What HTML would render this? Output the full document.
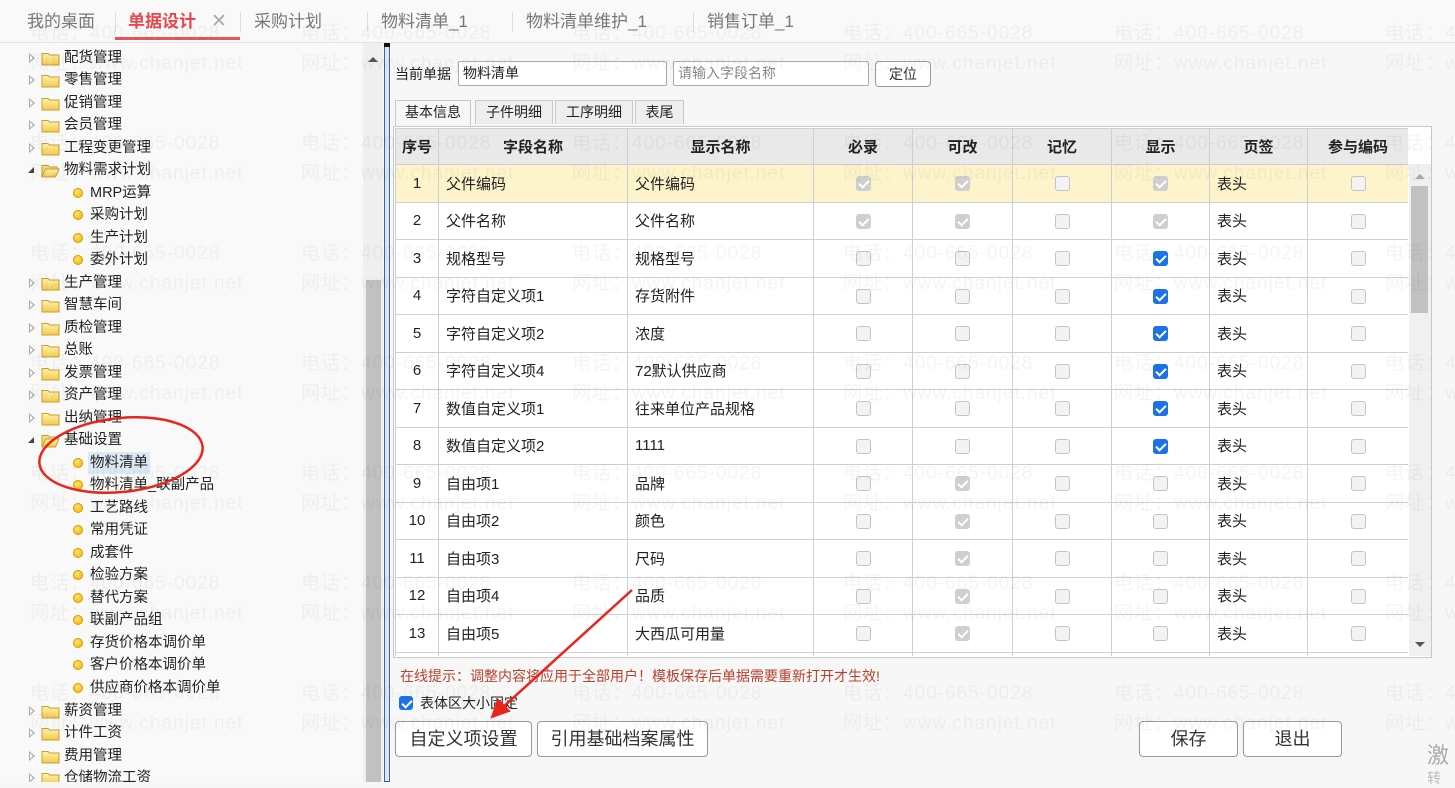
<!DOCTYPE html>
<html><head><meta charset="utf-8">
<style>
*{margin:0;padding:0;box-sizing:border-box}
body{width:1455px;height:782px;overflow:hidden;background:#f7f7f7;font-family:"Liberation Sans","Noto Sans CJK SC",sans-serif;font-size:14px;color:#222;position:relative}
.abs{position:absolute}
#tabs{left:0;top:0;width:1455px;height:43px;background:#f9f9f9;border-bottom:1px solid #e4e4e4}
.tab{position:absolute;top:9px;font-size:17px;color:#777;line-height:26px}
.sep{position:absolute;top:12px;width:1px;height:20px;background:#ddd}
#tree{left:0;top:43px;width:363px;height:739px;background:#f9f9f9;overflow:hidden}
.row{position:absolute;height:22px;line-height:22px;font-size:14.5px;color:#222;white-space:nowrap}
.arr{position:absolute;left:29px;top:6px;width:0;height:0;border-top:5px solid transparent;border-bottom:5px solid transparent;border-left:6px solid #aaa}
.arr:after{content:"";position:absolute;left:-5px;top:-3px;border-top:3px solid transparent;border-bottom:3px solid transparent;border-left:3px solid #f9f9f9}
.exp{position:absolute;left:28px;top:8px;width:0;height:0;border-left:6px solid transparent;border-bottom:6px solid #444}
.fold{position:absolute;left:41px;top:4px}
.dot{position:absolute;left:73px;top:6px;width:10px;height:10px;border-radius:50%;background:radial-gradient(circle at 40% 35%,#ffe46a,#f2b300);border:1px solid #d89a00}
#lsb{left:363px;top:43px;width:20px;height:739px;background:#efefef}
#main{left:391px;top:43px;width:1064px;height:739px;background:#f7f7f7}
.inp{position:absolute;height:25px;border:1px solid #aaa;background:#fff;font-size:14px;line-height:23px;padding-left:4px;border-radius:2px}
.btn{position:absolute;border:1px solid #999;border-radius:4px;background:#fff;text-align:center;color:#333}
.ttab{position:absolute;top:100px;height:24px;line-height:22px;border:1px solid #c8c8c8;border-bottom:none;background:#eee;font-size:14px;text-align:center;color:#222}
#tw{left:395px;top:128px;width:1013px;height:528px;overflow:hidden;background:#fff}
table{border-collapse:collapse;table-layout:fixed;width:1013px}
td,th{border:1px solid #cfcfcf;height:37.5px;font-size:15px;padding:0}
th{background:#e9e9e9;height:36px;font-weight:bold;font-size:15px}
td.c{text-align:center}
td.l{padding-left:7px}
tr.y td{background:#fdf4cb}
.cb{display:inline-block;width:15px;height:15px;border:1px solid #c4c4c4;border-radius:3px;background:#f3f3f3;position:relative;vertical-align:middle}
.cb.g{background:#cfcfcf;border-color:#cfcfcf}
.cb.b{background:#1a73e8;border-color:#1a73e8}
.cb.g:after,.cb.b:after{content:"";position:absolute;left:4px;top:1px;width:4px;height:8px;border:solid #fff;border-width:0 2px 2px 0;transform:rotate(45deg)}
.wm{position:absolute;font-size:19px;color:rgba(0,0,0,0.042);white-space:nowrap;letter-spacing:1px;pointer-events:none}
</style></head><body>

<div id="tabs" class="abs">
 <div class="tab" style="left:27px">我的桌面</div>
 <div class="sep" style="left:115px"></div>
 <div class="tab" style="left:128px;color:#e8474f;font-weight:bold">单据设计</div>
 <div class="tab" style="left:211px;color:#aaa;font-size:19px">✕</div>
 <div class="abs" style="left:115px;top:37px;width:125px;height:3px;background:#e8545c"></div>
 <div class="sep" style="left:240px"></div>
 <div class="tab" style="left:254px">采购计划</div>
 <div class="sep" style="left:367px"></div>
 <div class="tab" style="left:381px">物料清单_1</div>
 <div class="sep" style="left:512px"></div>
 <div class="tab" style="left:526px">物料清单维护_1</div>
 <div class="sep" style="left:693px"></div>
 <div class="tab" style="left:707px">销售订单_1</div>
</div>

<svg width="0" height="0" style="position:absolute"><defs>
<linearGradient id="fg" x1="0" y1="0" x2="0" y2="1"><stop offset="0" stop-color="#fff3b0"/><stop offset="1" stop-color="#f2c94c"/></linearGradient>
<symbol id="fd" viewBox="0 0 19 15"><path d="M1 2.5h6l1.5 1.5H18v10H1z" fill="url(#fg)" stroke="#c8a030" stroke-width="1"/></symbol>
<symbol id="fo" viewBox="0 0 19 15"><path d="M1 2.5h6l1.5 1.5H16v2H4.5L1 14z" fill="#f7dd80" stroke="#c8a030"/><path d="M4.5 6H18l-3.5 8H1z" fill="url(#fg)" stroke="#c8a030"/></symbol>
</defs></svg>

<div id="tree" class="abs">
 <div class="row" style="top:4px;left:0;width:360px"><i class="arr"></i><svg class="fold" width="19" height="15"><use href="#fd"/></svg><span style="position:absolute;left:64px">配货管理</span></div>
 <div class="row" style="top:26px;left:0;width:360px"><i class="arr"></i><svg class="fold" width="19" height="15"><use href="#fd"/></svg><span style="position:absolute;left:64px">零售管理</span></div>
 <div class="row" style="top:49px;left:0;width:360px"><i class="arr"></i><svg class="fold" width="19" height="15"><use href="#fd"/></svg><span style="position:absolute;left:64px">促销管理</span></div>
 <div class="row" style="top:71px;left:0;width:360px"><i class="arr"></i><svg class="fold" width="19" height="15"><use href="#fd"/></svg><span style="position:absolute;left:64px">会员管理</span></div>
 <div class="row" style="top:94px;left:0;width:360px"><i class="arr"></i><svg class="fold" width="19" height="15"><use href="#fd"/></svg><span style="position:absolute;left:64px">工程变更管理</span></div>
 <div class="row" style="top:116px;left:0;width:360px"><i class="exp"></i><svg class="fold" width="19" height="15"><use href="#fo"/></svg><span style="position:absolute;left:64px">物料需求计划</span></div>
 <div class="row" style="top:139px;left:0;width:360px"><i class="dot"></i><span style="position:absolute;left:90px">MRP运算</span></div>
 <div class="row" style="top:161px;left:0;width:360px"><i class="dot"></i><span style="position:absolute;left:90px">采购计划</span></div>
 <div class="row" style="top:184px;left:0;width:360px"><i class="dot"></i><span style="position:absolute;left:90px">生产计划</span></div>
 <div class="row" style="top:206px;left:0;width:360px"><i class="dot"></i><span style="position:absolute;left:90px">委外计划</span></div>
 <div class="row" style="top:229px;left:0;width:360px"><i class="arr"></i><svg class="fold" width="19" height="15"><use href="#fd"/></svg><span style="position:absolute;left:64px">生产管理</span></div>
 <div class="row" style="top:251px;left:0;width:360px"><i class="arr"></i><svg class="fold" width="19" height="15"><use href="#fd"/></svg><span style="position:absolute;left:64px">智慧车间</span></div>
 <div class="row" style="top:274px;left:0;width:360px"><i class="arr"></i><svg class="fold" width="19" height="15"><use href="#fd"/></svg><span style="position:absolute;left:64px">质检管理</span></div>
 <div class="row" style="top:296px;left:0;width:360px"><i class="arr"></i><svg class="fold" width="19" height="15"><use href="#fd"/></svg><span style="position:absolute;left:64px">总账</span></div>
 <div class="row" style="top:319px;left:0;width:360px"><i class="arr"></i><svg class="fold" width="19" height="15"><use href="#fd"/></svg><span style="position:absolute;left:64px">发票管理</span></div>
 <div class="row" style="top:341px;left:0;width:360px"><i class="arr"></i><svg class="fold" width="19" height="15"><use href="#fd"/></svg><span style="position:absolute;left:64px">资产管理</span></div>
 <div class="row" style="top:364px;left:0;width:360px"><i class="arr"></i><svg class="fold" width="19" height="15"><use href="#fd"/></svg><span style="position:absolute;left:64px">出纳管理</span></div>
 <div class="row" style="top:386px;left:0;width:360px"><i class="exp"></i><svg class="fold" width="19" height="15"><use href="#fo"/></svg><span style="position:absolute;left:64px">基础设置</span></div>
 <div class="row" style="top:409px;left:0;width:360px"><i class="dot"></i><span style="position:absolute;left:88px;padding:0 2px;background:#dde8f5">物料清单</span></div>
 <div class="row" style="top:431px;left:0;width:360px"><i class="dot"></i><span style="position:absolute;left:90px">物料清单_联副产品</span></div>
 <div class="row" style="top:454px;left:0;width:360px"><i class="dot"></i><span style="position:absolute;left:90px">工艺路线</span></div>
 <div class="row" style="top:476px;left:0;width:360px"><i class="dot"></i><span style="position:absolute;left:90px">常用凭证</span></div>
 <div class="row" style="top:499px;left:0;width:360px"><i class="dot"></i><span style="position:absolute;left:90px">成套件</span></div>
 <div class="row" style="top:521px;left:0;width:360px"><i class="dot"></i><span style="position:absolute;left:90px">检验方案</span></div>
 <div class="row" style="top:544px;left:0;width:360px"><i class="dot"></i><span style="position:absolute;left:90px">替代方案</span></div>
 <div class="row" style="top:566px;left:0;width:360px"><i class="dot"></i><span style="position:absolute;left:90px">联副产品组</span></div>
 <div class="row" style="top:589px;left:0;width:360px"><i class="dot"></i><span style="position:absolute;left:90px">存货价格本调价单</span></div>
 <div class="row" style="top:611px;left:0;width:360px"><i class="dot"></i><span style="position:absolute;left:90px">客户价格本调价单</span></div>
 <div class="row" style="top:634px;left:0;width:360px"><i class="dot"></i><span style="position:absolute;left:90px">供应商价格本调价单</span></div>
 <div class="row" style="top:657px;left:0;width:360px"><i class="arr"></i><svg class="fold" width="19" height="15"><use href="#fd"/></svg><span style="position:absolute;left:64px">薪资管理</span></div>
 <div class="row" style="top:679px;left:0;width:360px"><i class="arr"></i><svg class="fold" width="19" height="15"><use href="#fd"/></svg><span style="position:absolute;left:64px">计件工资</span></div>
 <div class="row" style="top:702px;left:0;width:360px"><i class="arr"></i><svg class="fold" width="19" height="15"><use href="#fd"/></svg><span style="position:absolute;left:64px">费用管理</span></div>
 <div class="row" style="top:724px;left:0;width:360px"><i class="arr"></i><svg class="fold" width="19" height="15"><use href="#fd"/></svg><span style="position:absolute;left:64px">仓储物流工资</span></div>
</div>

<div id="lsb" class="abs">
 <div class="abs" style="left:5px;top:14px;width:0;height:0;border-left:5px solid transparent;border-right:5px solid transparent;border-bottom:5px solid #555"></div>
 <div class="abs" style="left:3px;top:237px;width:15px;height:502px;background:#c1c1c1"></div>
</div>
<div class="abs" style="left:384px;top:43px;width:6px;height:739px;background:#dbe6f5;border:1px solid #3a62a8"></div>
<div class="abs" style="left:384px;top:43px;width:6px;height:4px;background:#111"></div>

<div id="main" class="abs"></div>
<div class="abs" style="left:395px;top:64px;font-size:14px">当前单据</div>
<div class="inp" style="left:458px;top:61px;width:209px">物料清单</div>
<div class="inp" style="left:673px;top:61px;width:196px;color:#888">请输入字段名称</div>
<div class="btn" style="left:875px;top:61px;width:56px;height:26px;line-height:24px;font-size:14px">定位</div>

<div class="ttab" style="left:395px;width:76px;background:#f7f7f7;height:26px">基本信息</div>
<div class="ttab" style="left:475px;width:78px">子件明细</div>
<div class="ttab" style="left:555px;width:78px">工序明细</div>
<div class="ttab" style="left:635px;width:49px">表尾</div>
<div class="abs" style="left:393px;top:126px;width:1039px;height:532px;border:1px solid #c8c8c8;background:#fff"></div>

<div id="tw" class="abs">
<table>
<colgroup><col style="width:43px"><col style="width:189px"><col style="width:186px"><col style="width:99px"><col style="width:100px"><col style="width:99px"><col style="width:98px"><col style="width:98px"><col style="width:101px"></colgroup>
<tr><th>序号</th><th>字段名称</th><th>显示名称</th><th>必录</th><th>可改</th><th>记忆</th><th>显示</th><th>页签</th><th>参与编码</th></tr>
<tr class="y"><td class="c">1</td><td class="l">父件编码</td><td class="l">父件编码</td><td class="c"><i class="cb g"></i></td><td class="c"><i class="cb g"></i></td><td class="c"><i class="cb"></i></td><td class="c"><i class="cb g"></i></td><td class="l">表头</td><td class="c"><i class="cb"></i></td></tr>
<tr><td class="c">2</td><td class="l">父件名称</td><td class="l">父件名称</td><td class="c"><i class="cb g"></i></td><td class="c"><i class="cb g"></i></td><td class="c"><i class="cb"></i></td><td class="c"><i class="cb g"></i></td><td class="l">表头</td><td class="c"><i class="cb"></i></td></tr>
<tr><td class="c">3</td><td class="l">规格型号</td><td class="l">规格型号</td><td class="c"><i class="cb"></i></td><td class="c"><i class="cb"></i></td><td class="c"><i class="cb"></i></td><td class="c"><i class="cb b"></i></td><td class="l">表头</td><td class="c"><i class="cb"></i></td></tr>
<tr><td class="c">4</td><td class="l">字符自定义项1</td><td class="l">存货附件</td><td class="c"><i class="cb"></i></td><td class="c"><i class="cb"></i></td><td class="c"><i class="cb"></i></td><td class="c"><i class="cb b"></i></td><td class="l">表头</td><td class="c"><i class="cb"></i></td></tr>
<tr><td class="c">5</td><td class="l">字符自定义项2</td><td class="l">浓度</td><td class="c"><i class="cb"></i></td><td class="c"><i class="cb"></i></td><td class="c"><i class="cb"></i></td><td class="c"><i class="cb b"></i></td><td class="l">表头</td><td class="c"><i class="cb"></i></td></tr>
<tr><td class="c">6</td><td class="l">字符自定义项4</td><td class="l">72默认供应商</td><td class="c"><i class="cb"></i></td><td class="c"><i class="cb"></i></td><td class="c"><i class="cb"></i></td><td class="c"><i class="cb b"></i></td><td class="l">表头</td><td class="c"><i class="cb"></i></td></tr>
<tr><td class="c">7</td><td class="l">数值自定义项1</td><td class="l">往来单位产品规格</td><td class="c"><i class="cb"></i></td><td class="c"><i class="cb"></i></td><td class="c"><i class="cb"></i></td><td class="c"><i class="cb b"></i></td><td class="l">表头</td><td class="c"><i class="cb"></i></td></tr>
<tr><td class="c">8</td><td class="l">数值自定义项2</td><td class="l">1111</td><td class="c"><i class="cb"></i></td><td class="c"><i class="cb"></i></td><td class="c"><i class="cb"></i></td><td class="c"><i class="cb b"></i></td><td class="l">表头</td><td class="c"><i class="cb"></i></td></tr>
<tr><td class="c">9</td><td class="l">自由项1</td><td class="l">品牌</td><td class="c"><i class="cb"></i></td><td class="c"><i class="cb g"></i></td><td class="c"><i class="cb"></i></td><td class="c"><i class="cb"></i></td><td class="l">表头</td><td class="c"><i class="cb"></i></td></tr>
<tr><td class="c">10</td><td class="l">自由项2</td><td class="l">颜色</td><td class="c"><i class="cb"></i></td><td class="c"><i class="cb g"></i></td><td class="c"><i class="cb"></i></td><td class="c"><i class="cb"></i></td><td class="l">表头</td><td class="c"><i class="cb"></i></td></tr>
<tr><td class="c">11</td><td class="l">自由项3</td><td class="l">尺码</td><td class="c"><i class="cb"></i></td><td class="c"><i class="cb g"></i></td><td class="c"><i class="cb"></i></td><td class="c"><i class="cb"></i></td><td class="l">表头</td><td class="c"><i class="cb"></i></td></tr>
<tr><td class="c">12</td><td class="l">自由项4</td><td class="l">品质</td><td class="c"><i class="cb"></i></td><td class="c"><i class="cb g"></i></td><td class="c"><i class="cb"></i></td><td class="c"><i class="cb"></i></td><td class="l">表头</td><td class="c"><i class="cb"></i></td></tr>
<tr><td class="c">13</td><td class="l">自由项5</td><td class="l">大西瓜可用量</td><td class="c"><i class="cb"></i></td><td class="c"><i class="cb g"></i></td><td class="c"><i class="cb"></i></td><td class="c"><i class="cb"></i></td><td class="l">表头</td><td class="c"><i class="cb"></i></td></tr>
<tr><td class="c"></td><td></td><td></td><td></td><td></td><td></td><td></td><td></td><td></td></tr>
</table>
</div>
<div class="abs" style="left:1409px;top:164px;width:22px;height:492px;background:#f0f0f0"></div>
<div class="abs" style="left:1415px;top:174px;border-left:5px solid transparent;border-right:5px solid transparent;border-bottom:5px solid #aaa"></div>
<div class="abs" style="left:1411px;top:186px;width:17px;height:127px;background:#c1c1c1"></div>
<div class="abs" style="left:1415px;top:642px;border-left:5px solid transparent;border-right:5px solid transparent;border-top:5px solid #555"></div>

<div class="abs" style="left:400px;top:666px;font-size:14px;color:#b8412c">在线提示：调整内容将应用于全部用户！模板保存后单据需要重新打开才生效!</div>
<div class="cb b" style="position:absolute;left:399px;top:696px;width:14px;height:14px"></div>
<div class="abs" style="left:420px;top:693px;font-size:14px">表体区大小固定</div>
<div class="btn" style="left:395px;top:721px;width:137px;height:36px;line-height:34px;font-size:18px">自定义项设置</div>
<div class="btn" style="left:537px;top:721px;width:171px;height:36px;line-height:34px;font-size:18px">引用基础档案属性</div>
<div class="btn" style="left:1139px;top:721px;width:99px;height:36px;line-height:34px;font-size:18px">保存</div>
<div class="btn" style="left:1243px;top:721px;width:99px;height:36px;line-height:34px;font-size:18px">退出</div>
<div class="abs" style="left:1427px;top:738px;font-size:22px;color:#aaa">激</div>
<div class="abs" style="left:1427px;top:768px;font-size:14px;color:#bbb">转</div>

<div class="wm" style="left:30px;top:18px">电话：400-665-0028</div><div class="wm" style="left:30px;top:48px">网址：www.chanjet.net</div>
<div class="wm" style="left:301px;top:18px">电话：400-665-0028</div><div class="wm" style="left:301px;top:48px">网址：www.chanjet.net</div>
<div class="wm" style="left:572px;top:18px">电话：400-665-0028</div><div class="wm" style="left:572px;top:48px">网址：www.chanjet.net</div>
<div class="wm" style="left:843px;top:18px">电话：400-665-0028</div><div class="wm" style="left:843px;top:48px">网址：www.chanjet.net</div>
<div class="wm" style="left:1114px;top:18px">电话：400-665-0028</div><div class="wm" style="left:1114px;top:48px">网址：www.chanjet.net</div>
<div class="wm" style="left:1385px;top:18px">电话：400-665-0028</div><div class="wm" style="left:1385px;top:48px">网址：www.chanjet.net</div>

<div class="wm" style="left:30px;top:128px">电话：400-665-0028</div><div class="wm" style="left:30px;top:158px">网址：www.chanjet.net</div>
<div class="wm" style="left:301px;top:128px">电话：400-665-0028</div><div class="wm" style="left:301px;top:158px">网址：www.chanjet.net</div>
<div class="wm" style="left:572px;top:128px">电话：400-665-0028</div><div class="wm" style="left:572px;top:158px">网址：www.chanjet.net</div>
<div class="wm" style="left:843px;top:128px">电话：400-665-0028</div><div class="wm" style="left:843px;top:158px">网址：www.chanjet.net</div>
<div class="wm" style="left:1114px;top:128px">电话：400-665-0028</div><div class="wm" style="left:1114px;top:158px">网址：www.chanjet.net</div>
<div class="wm" style="left:1385px;top:128px">电话：400-665-0028</div><div class="wm" style="left:1385px;top:158px">网址：www.chanjet.net</div>

<div class="wm" style="left:30px;top:238px">电话：400-665-0028</div><div class="wm" style="left:30px;top:268px">网址：www.chanjet.net</div>
<div class="wm" style="left:301px;top:238px">电话：400-665-0028</div><div class="wm" style="left:301px;top:268px">网址：www.chanjet.net</div>
<div class="wm" style="left:572px;top:238px">电话：400-665-0028</div><div class="wm" style="left:572px;top:268px">网址：www.chanjet.net</div>
<div class="wm" style="left:843px;top:238px">电话：400-665-0028</div><div class="wm" style="left:843px;top:268px">网址：www.chanjet.net</div>
<div class="wm" style="left:1114px;top:238px">电话：400-665-0028</div><div class="wm" style="left:1114px;top:268px">网址：www.chanjet.net</div>
<div class="wm" style="left:1385px;top:238px">电话：400-665-0028</div><div class="wm" style="left:1385px;top:268px">网址：www.chanjet.net</div>

<div class="wm" style="left:30px;top:348px">电话：400-665-0028</div><div class="wm" style="left:30px;top:378px">网址：www.chanjet.net</div>
<div class="wm" style="left:301px;top:348px">电话：400-665-0028</div><div class="wm" style="left:301px;top:378px">网址：www.chanjet.net</div>
<div class="wm" style="left:572px;top:348px">电话：400-665-0028</div><div class="wm" style="left:572px;top:378px">网址：www.chanjet.net</div>
<div class="wm" style="left:843px;top:348px">电话：400-665-0028</div><div class="wm" style="left:843px;top:378px">网址：www.chanjet.net</div>
<div class="wm" style="left:1114px;top:348px">电话：400-665-0028</div><div class="wm" style="left:1114px;top:378px">网址：www.chanjet.net</div>
<div class="wm" style="left:1385px;top:348px">电话：400-665-0028</div><div class="wm" style="left:1385px;top:378px">网址：www.chanjet.net</div>

<div class="wm" style="left:30px;top:458px">电话：400-665-0028</div><div class="wm" style="left:30px;top:488px">网址：www.chanjet.net</div>
<div class="wm" style="left:301px;top:458px">电话：400-665-0028</div><div class="wm" style="left:301px;top:488px">网址：www.chanjet.net</div>
<div class="wm" style="left:572px;top:458px">电话：400-665-0028</div><div class="wm" style="left:572px;top:488px">网址：www.chanjet.net</div>
<div class="wm" style="left:843px;top:458px">电话：400-665-0028</div><div class="wm" style="left:843px;top:488px">网址：www.chanjet.net</div>
<div class="wm" style="left:1114px;top:458px">电话：400-665-0028</div><div class="wm" style="left:1114px;top:488px">网址：www.chanjet.net</div>
<div class="wm" style="left:1385px;top:458px">电话：400-665-0028</div><div class="wm" style="left:1385px;top:488px">网址：www.chanjet.net</div>

<div class="wm" style="left:30px;top:568px">电话：400-665-0028</div><div class="wm" style="left:30px;top:598px">网址：www.chanjet.net</div>
<div class="wm" style="left:301px;top:568px">电话：400-665-0028</div><div class="wm" style="left:301px;top:598px">网址：www.chanjet.net</div>
<div class="wm" style="left:572px;top:568px">电话：400-665-0028</div><div class="wm" style="left:572px;top:598px">网址：www.chanjet.net</div>
<div class="wm" style="left:843px;top:568px">电话：400-665-0028</div><div class="wm" style="left:843px;top:598px">网址：www.chanjet.net</div>
<div class="wm" style="left:1114px;top:568px">电话：400-665-0028</div><div class="wm" style="left:1114px;top:598px">网址：www.chanjet.net</div>
<div class="wm" style="left:1385px;top:568px">电话：400-665-0028</div><div class="wm" style="left:1385px;top:598px">网址：www.chanjet.net</div>

<div class="wm" style="left:30px;top:678px">电话：400-665-0028</div><div class="wm" style="left:30px;top:708px">网址：www.chanjet.net</div>
<div class="wm" style="left:301px;top:678px">电话：400-665-0028</div><div class="wm" style="left:301px;top:708px">网址：www.chanjet.net</div>
<div class="wm" style="left:572px;top:678px">电话：400-665-0028</div><div class="wm" style="left:572px;top:708px">网址：www.chanjet.net</div>
<div class="wm" style="left:843px;top:678px">电话：400-665-0028</div><div class="wm" style="left:843px;top:708px">网址：www.chanjet.net</div>
<div class="wm" style="left:1114px;top:678px">电话：400-665-0028</div><div class="wm" style="left:1114px;top:708px">网址：www.chanjet.net</div>
<div class="wm" style="left:1385px;top:678px">电话：400-665-0028</div><div class="wm" style="left:1385px;top:708px">网址：www.chanjet.net</div>

<svg class="abs" style="left:0;top:0" width="1455" height="782">
 <ellipse cx="121" cy="455" rx="82" ry="37" transform="rotate(-6 121 455)" fill="none" stroke="#e8241c" stroke-width="2.5"/>
 <line x1="632" y1="590" x2="502" y2="708" stroke="#e8241c" stroke-width="2.5"/>
 <path d="M492 717 L498 700 L509 711 Z" fill="#e8241c" stroke="#e8241c" stroke-width="2"/>
</svg>
</body></html>
